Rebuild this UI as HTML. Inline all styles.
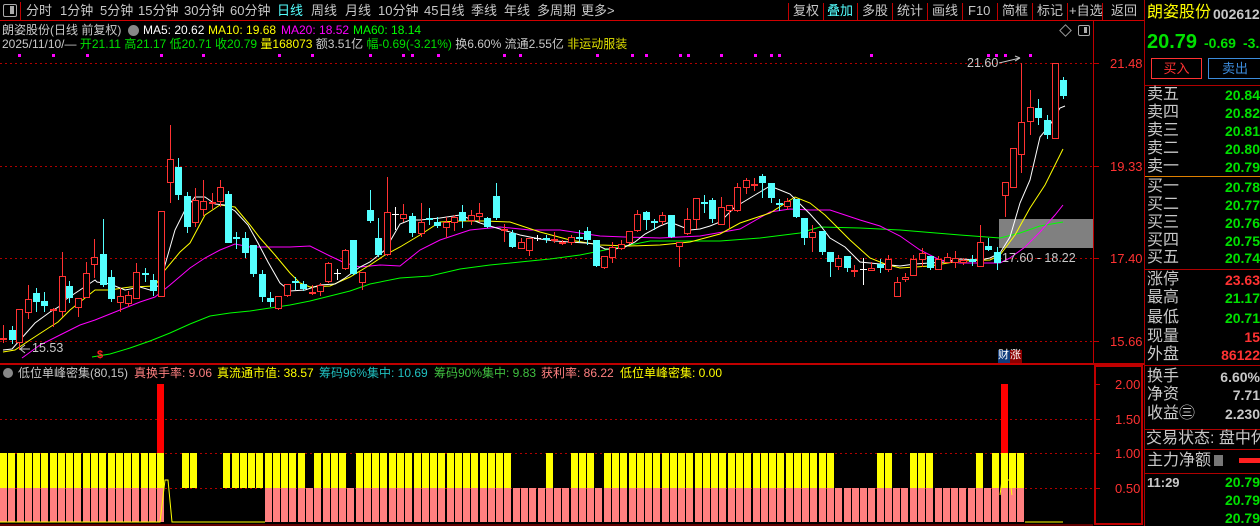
<!DOCTYPE html>
<html><head><meta charset="utf-8">
<style>
html,body{margin:0;padding:0;background:#000;width:1260px;height:526px;overflow:hidden;}
body{position:relative;font-family:"Liberation Sans","Noto Sans CJK SC",sans-serif;color:#c8c8c8;}
.t{position:absolute;white-space:nowrap;line-height:1;}
.tb{font-size:13px;top:4px;color:#c8c8c8;}
.sep{position:absolute;top:3px;width:1px;height:17px;background:#c00000;}
.r1{font-size:12px;top:24px;}
.r2{font-size:12px;top:38px;}
.ih{font-size:12px;top:367px;}
.lab{position:absolute;left:1147px;font-size:16px;color:#c8c8c8;line-height:1;white-space:nowrap;}
.val{position:absolute;right:0;font-size:14px;font-weight:bold;line-height:1;white-space:nowrap;}
.g{color:#00e000}.rd{color:#ff3232}.gy{color:#c8c8c8}
.hl{position:absolute;left:1145px;width:115px;height:1px;background:#b00000;}
</style></head><body>
<div style="position:absolute;left:3px;top:4px;width:12px;height:11px;border:1px solid #aaa;border-radius:2px;"></div>
<div style="position:absolute;left:10px;top:6px;width:4px;height:8px;background:#aaa;"></div>
<div style="position:absolute;left:20px;top:2px;width:1px;height:18px;background:#c00000"></div>
<div class="t tb" style="left:26px">分时</div>
<div class="t tb" style="left:60px">1分钟</div>
<div class="t tb" style="left:100px">5分钟</div>
<div class="t tb" style="left:138px">15分钟</div>
<div class="t tb" style="left:184px">30分钟</div>
<div class="t tb" style="left:230px">60分钟</div>
<div class="t tb" style="left:277px;color:#54ffff">日线</div>
<div class="t tb" style="left:311px">周线</div>
<div class="t tb" style="left:345px">月线</div>
<div class="t tb" style="left:378px">10分钟</div>
<div class="t tb" style="left:424px">45日线</div>
<div class="t tb" style="left:471px">季线</div>
<div class="t tb" style="left:504px">年线</div>
<div class="t tb" style="left:537px">多周期</div>
<div class="t tb" style="left:581px">更多&gt;</div>
<div class="sep" style="left:788px"></div><div class="t tb" style="left:793px">复权</div>
<div class="sep" style="left:823px"></div><div class="t tb" style="left:827px;color:#54ffff">叠加</div>
<div class="sep" style="left:857px"></div><div class="t tb" style="left:862px">多股</div>
<div class="sep" style="left:892px"></div><div class="t tb" style="left:897px">统计</div>
<div class="sep" style="left:927px"></div><div class="t tb" style="left:932px">画线</div>
<div class="sep" style="left:962px"></div><div class="t tb" style="left:968px">F10</div>
<div class="sep" style="left:997px"></div><div class="t tb" style="left:1002px">简框</div>
<div class="sep" style="left:1032px"></div><div class="t tb" style="left:1037px">标记</div>
<div class="sep" style="left:1067px"></div><div class="t tb" style="left:1069px">+自选</div>
<div class="sep" style="left:1102px"></div><div class="t tb" style="left:1111px">返回</div>
<div style="position:absolute;left:0;top:20px;width:1144px;height:1px;background:#d00000"></div>

<div class="t r1" style="left:2px">朗姿股份(日线 前复权)</div>
<div style="position:absolute;left:128px;top:25px;width:11px;height:11px;border-radius:50%;background:#888"></div>
<div class="t r1" style="left:143px;color:#fff">MA5: 20.62</div>
<div class="t r1" style="left:208px;color:#ffff00">MA10: 19.68</div>
<div class="t r1" style="left:281px;color:#ff00ff">MA20: 18.52</div>
<div class="t r1" style="left:353px;color:#00ff00">MA60: 18.14</div>
<div class="t r2" style="left:2px">2025/11/10/— <span class="g">开21.11 高21.17 低20.71 收20.79</span> <span style="color:#ffff00">量168073</span> 额3.51亿 <span class="g">幅-0.69(-3.21%)</span> 换6.60% 流通2.55亿 <span style="color:#e0e000">非运动服装</span></div>

<div style="position:absolute;left:1061px;top:26px;width:7px;height:7px;border:1px solid #999;transform:rotate(45deg)"></div>
<div style="position:absolute;left:1078px;top:25px;width:10px;height:9px;border:1px solid #aaa;border-radius:2px"></div>
<div style="position:absolute;left:1084px;top:27px;width:3px;height:6px;background:#aaa"></div>

<svg id="ch" width="1260" height="526" style="position:absolute;left:0;top:0" xmlns="http://www.w3.org/2000/svg"></svg>

<div class="t" style="left:967px;top:57px;font-size:12.5px;color:#c8c8c8">21.60</div>
<div class="t" style="left:1002px;top:252px;font-size:12.5px;color:#c8c8c8">17.60 - 18.22</div>
<div class="t" style="left:32px;top:342px;font-size:12.5px;color:#c8c8c8">15.53</div>
<div class="t" style="left:97px;top:350px;font-size:11px;color:#ff2020;font-weight:bold">$</div>
<div class="t" style="left:998px;top:350px;font-size:11px;color:#fff;background:#103c7c;width:12px;height:13px">财</div>
<div class="t" style="left:1010px;top:350px;font-size:11px;color:#fff;background:#8c0000;width:12px;height:13px">涨</div>
<div class="t" style="left:1110px;top:57px;font-size:13px;color:#ff3232">21.48</div>
<div class="t" style="left:1110px;top:160px;font-size:13px;color:#ff3232">19.33</div>
<div class="t" style="left:1110px;top:252px;font-size:13px;color:#ff3232">17.40</div>
<div class="t" style="left:1110px;top:335px;font-size:13px;color:#ff3232">15.66</div>

<div style="position:absolute;left:3px;top:368px;width:10px;height:10px;border-radius:50%;background:#888"></div>
<div class="t ih" style="left:18px;color:#c8c8c8">低位单峰密集(80,15)</div>
<div class="t ih" style="left:134px;color:#ff8080">真换手率: 9.06</div>
<div class="t ih" style="left:217px;color:#ffff00">真流通市值: 38.57</div>
<div class="t ih" style="left:319px;color:#20c0c0">筹码96%集中: 10.69</div>
<div class="t ih" style="left:434px;color:#40c040">筹码90%集中: 9.83</div>
<div class="t ih" style="left:541px;color:#ff8080">获利率: 86.22</div>
<div class="t ih" style="left:620px;color:#ffff00">低位单峰密集: 0.00</div>
<div class="t" style="left:1115px;top:378px;font-size:13px;color:#ff3232">2.00</div>
<div class="t" style="left:1115px;top:413px;font-size:13px;color:#ff3232">1.50</div>
<div class="t" style="left:1115px;top:447px;font-size:13px;color:#ff3232">1.00</div>
<div class="t" style="left:1115px;top:482px;font-size:13px;color:#ff3232">0.50</div>

<div style="position:absolute;left:1144px;top:0;width:1px;height:526px;background:#b00000"></div>
<div class="t" style="left:1147px;top:5px;font-size:16px;color:#ffff00">朗姿股份</div>
<div class="t" style="left:1213px;top:7px;font-size:14px;font-weight:bold;color:#c8c8c8">002612</div>
<div class="t" style="left:1147px;top:32px;font-size:20px;font-weight:bold;color:#00e000">20.79</div>
<div class="t" style="left:1204px;top:36px;font-size:14px;font-weight:bold;color:#00e000">-0.69</div>
<div class="t" style="left:1243px;top:36px;font-size:14px;font-weight:bold;color:#00e000">-3.21%</div>
<div class="t" style="left:1151px;top:58px;width:49px;height:19px;border:1px solid #ff3232;color:#ff3232;font-size:13px;text-align:center;line-height:19px">买入</div>
<div class="t" style="left:1208px;top:58px;width:52px;height:19px;border:1px solid #3c8cdc;color:#3c8cdc;font-size:13px;text-align:center;line-height:19px">卖出</div>
<div class="hl" style="top:85px"></div>
<div class="hl" style="top:176px;background:#e08000"></div>
<div class="hl" style="top:269px"></div>
<div class="hl" style="top:365px"></div>
<div class="hl" style="top:429px"></div>
<div class="hl" style="top:449px"></div>
<div class="hl" style="top:473px"></div>
<div id="rp"></div>

<script>
var s='';
function L(x1,y1,x2,y2,c,w,da){s+='<line x1="'+x1+'" y1="'+y1+'" x2="'+x2+'" y2="'+y2+'" stroke="'+c+'" stroke-width="'+(w||1)+'"'+(da?' stroke-dasharray="'+da+'"':'')+'/>';}
function R(x,y,w,h,f,st,sw){s+='<rect x="'+x+'" y="'+y+'" width="'+w+'" height="'+h+'" fill="'+f+'"'+(st?' stroke="'+st+'" stroke-width="'+(sw||1)+'"':'')+'/>';}
[63,166,258,341].forEach(function(y){L(0,y+.5,1093,y+.5,'#b00000',1,'2,3');L(1093,y+.5,1099,y+.5,'#c00000');});
[419,453,488].forEach(function(y){L(0,y+.5,1093,y+.5,'#b00000',1,'2,3');});
L(1093.5,21,1093.5,364,'#c00000');
L(0,364,1144,364,'#c00000',2);
R(1095,366,47,158,'none','#c00000',2);
[384,419,453,488].forEach(function(y){L(1095,y+.5,1100,y+.5,'#c00000');});
L(0,525,1093,525,'#c00000');
[18,52,86,160,202,278,311,369,402,411,437,503,519,596,631,645,679,687,720,754,770,778,870,987,995,1004,1029].forEach(function(x){R(x,54,3,3,'#ff00ff');});
R(999,219,94,29,'#808080');
function P(pts,c){s+='<polyline fill="none" stroke="'+c+'" stroke-width="1" points="'+pts+'"/>';}
P("92,357 110,354 130,348 150,341 170,333 190,324 210,316 230,313 250,311 270,308 290,305 310,301 330,296 350,291 370,284 400,278 430,276 460,269 490,265 520,262 550,259 580,255 620,247 650,241 680,241 720,241 760,238 800,233 820,227 860,228 900,230 960,235 1000,238 1020,233 1040,226 1063,222","#00ff00");
P("22,358 40,345 60,335 80,325 95,320 120,310 140,302 155,297 170,285 190,268 205,258 220,250 235,244 250,247 270,247 290,247 310,246 330,256 345,263 360,267 380,265 400,266 420,250 440,240 470,230 500,227 530,230 560,230 600,236 625,237 660,238 700,236 740,229 770,212 790,209 810,210 830,210 860,220 880,226 900,236 920,250 940,260 960,263 1000,263 1010,258 1025,247 1040,232 1055,215 1063,205","#ff00ff");
P("3,352 15,350 30,340 50,327 58,322 70,310 85,298 95,290 110,290 130,287 155,286 165,270 180,252 190,243 205,215 220,205 235,207 250,225 260,238 275,255 290,273 300,283 310,287 330,286 350,277 370,265 385,255 400,247 420,235 440,222 460,221 485,221 510,222 540,232 570,240 600,245 630,246 660,245 690,242 720,234 740,223 770,213 795,197 810,203 825,215 840,230 850,240 870,258 885,264 900,268 930,266 960,261 990,260 1000,255 1015,235 1030,208 1045,185 1063,149","#ffff00");
P("3,350 12,349 20,340 35,323 50,312 60,306 65,300 80,290 95,280 97,282 110,284 125,290 140,287 150,290 160,285 165,265 175,230 185,210 195,197 205,197 215,204 225,205 235,211 248,225 258,243 268,262 280,283 290,291 305,290 320,285 335,284 345,278 360,267 370,262 385,250 400,224 410,220 420,220 440,218 460,215 480,223 500,229 520,235 540,239 555,241 570,242 585,243 595,244 605,249 615,249 625,247 635,242 645,234 660,226 670,222 680,226 690,230 700,229 710,226 720,222 735,207 750,198 760,192 770,186 780,190 790,194 800,204 810,214 820,225 830,238 845,247 860,262 880,264 900,266 915,264 930,263 945,262 960,259 980,260 990,258 1000,253 1010,237 1020,203 1030,180 1040,137 1050,125 1060,108 1065,106","#ffffff");
var C=[[3.3,'r',338,338,325,343],[11.7,'c',330,340,326,344],[19.3,'r',309,342,309,350],[28.3,'r',299,312,285,319],[36,'c',293,302,288,312],[44.3,'c',301,306,292,312],[53.3,'r',309,309,308,327],[61.7,'r',276,311,252,317],[69.3,'c',286,298,281,303],[78.3,'r',298,307,298,317],[86,'r',273,297,262,297],[94.3,'r',257,264,239,278],[103.3,'c',254,285,219,287],[111,'c',277,299,270,302],[120,'r',296,302,288,312],[128.3,'r',295,303,291,307],[136,'r',272,298,263,299],[145,'c',273,273,268,282],[153.3,'c',280,291,274,296],[161,'r',211,296,211,296],[170,'r',159,182,125,203],[178.3,'c',167,195,158,200],[186.7,'c',196,227,192,233],[195,'r',200,222,188,227],[203.3,'r',201,209,180,216],[211.7,'r',202,202,193,209],[220,'r',187,201,180,207],[228.3,'c',194,243,191,243],[236,'c',237,237,232,249],[245,'c',238,253,232,258],[253.3,'c',245,274,245,277],[261.7,'c',274,297,270,302],[270,'c',298,302,292,307],[278.3,'r',296,308,296,310],[286.7,'r',284,295,284,297],[295,'c',281,281,277,290],[303.3,'c',284,289,281,291],[311.7,'r',292,292,285,295],[320,'r',285,291,283,296],[328.3,'r',263,281,262,283],[336.7,'w',273,273,269,280],[345,'r',250,268,249,270],[353.3,'c',240,274,240,275],[361.7,'r',272,282,272,290],[370,'c',210,221,190,223],[378.3,'c',238,255,218,257],[386.7,'r',212,254,177,256],[395,'w',214,214,207,230],[403.3,'r',214,218,204,222],
[412.3,'c',216,233,213,237],[420.7,'r',222,233,203,237],[429.3,'c',218,218,208,225],[437.3,'c',222,226,217,228],[445.7,'r',222,227,217,238],[454,'r',217,222,215,231],[462.3,'c',212,221,205,228],[470.7,'r',215,220,210,225],[479,'r',213,216,203,222],[487.3,'c',218,227,217,228],[495.7,'c',196,218,183,220],[504,'r',229,229,224,242],[512.3,'c',233,247,230,248],[520.7,'r',242,248,238,248],[529,'r',238,250,238,256],[537.3,'w',238,238,235,241],[545.7,'c',238,238,235,243],[554,'r',239,239,232,243],[562.3,'r',242,242,240,245],[570.7,'r',237,242,235,245],[579,'c',237,237,230,242],[587.3,'c',231,240,227,245],[595.7,'c',240,266,240,267],[604,'r',256,267,256,269],[612.3,'r',247,257,242,263],[620.7,'r',244,248,240,250],[629,'r',231,242,231,244],[637.3,'r',214,230,210,232],[645.7,'c',212,220,211,230],[654,'c',221,221,219,230],[662.3,'r',215,221,212,225],[670.7,'c',215,237,215,238],[679,'r',242,246,242,267],[687.3,'r',219,233,208,235],[695.7,'r',198,219,198,229],[704,'c',202,202,195,213],[712.3,'c',200,219,198,223],[720.7,'r',207,224,197,224],[729,'r',205,210,205,228],[737.3,'r',187,210,183,212],[745.7,'r',180,187,178,194],[754,'r',184,184,178,191],[762.3,'c',176,183,174,198],[770.7,'c',183,198,183,203],[779,'c',203,203,199,211],[787.3,'r',201,206,198,210],[795.7,'c',199,217,199,218],[804,'c',218,238,218,245],[812.3,'r',232,237,225,252],
[821.7,'c',231,252,231,255],[830,'c',252,262,252,277],[838.3,'r',258,266,255,270],[846.7,'c',256,268,256,272],[854.3,'r',270,270,265,277],[862.7,'w',269,269,258,285],[871,'r',268,270,262,270],[880,'c',264,268,259,273],[888.3,'r',259,269,255,272],[896.7,'r',282,296,277,297],[905,'r',277,279,273,282],[913.3,'r',259,275,255,275],[921.7,'r',253,259,248,267],[930,'c',256,268,256,270],[938.3,'r',259,269,256,270],[946.7,'r',257,262,253,262],[955,'r',258,262,251,268],[963.3,'r',260,262,258,265],[971.7,'c',259,262,255,266],[980,'r',242,266,225,266],[988.3,'c',246,250,238,251],[996.7,'c',252,263,247,270],[1005,'r',182,195,182,217],[1013.3,'r',148,187,148,187],[1021,'r',122,154,63,173],[1030,'r',107,121,90,135],[1038.3,'c',108,118,99,125],[1047.3,'c',120,135,115,139],[1055.3,'r',63,138,63,138],[1063.3,'c',80,96,77,99]];
C.forEach(function(k){var x=Math.round(k[0]),t=k[1],o=k[2],c=k[3],h=k[4],l=k[5];
 var col=t=='r'?'#ff3232':(t=='c'?'#54ffff':'#ffffff');
 var xc=x+.5;
 L(xc,h,xc,l,col);
 if(o==c){L(x-3,o+.5,x+4,o+.5,col,1);if(t!='w')L(x-3,o+1.5,x+4,o+1.5,col,1);}
 else if(t=='r'){R(x-3+.5,o+.5,6,c-o,'#000','#ff3232');}
 else{R(x-3,o,7,c-o,col);}
});
L(999,63,1020,58,'#c8c8c8');L(1015,56,1020,58,'#c8c8c8');L(1015,61,1020,58,'#c8c8c8');
L(20,349,30,349,'#c8c8c8');L(20,349,25,345,'#c8c8c8');L(20,349,25,353,'#c8c8c8');
function inr(i,a){return i>=a[0]&&i<=a[1];}
var Y=[[0,19],[22,23],[27,36],[38,41],[43,61],[66,66],[69,71],[73,100],[106,107],[110,112],[118,118],[120,123]];
var Pk=[[0,19],[32,123]];
for(var i=0;i<=123;i++){var x=Math.round(i*8.27);
 if(Pk.some(function(a){return inr(i,a)}))R(x,488,7,34,'#ff8080');
 if(Y.some(function(a){return inr(i,a)}))R(x,453,7,35,'#ffff00');
 if(i==19||i==121)R(x,384,7,69,'#ff0000');
}
P("0,522 160,522 165,480 168,480 172,522 265,522","#ffff00");
P("1000,495 1002,480 1010,480 1012,495","#ffff00");
L(1025,522,1063,522,'#ffff00');
document.getElementById('ch').innerHTML=s;
var rows=[['卖五','20.84',95,'g'],['卖四','20.82',113,'g'],['卖三','20.81',131,'g'],['卖二','20.80',149,'g'],['卖一','20.79',167,'g'],
['买一','20.78',187,'g'],['买二','20.77',205,'g'],['买三','20.76',223,'g'],['买四','20.75',241,'g'],['买五','20.74',258,'g'],
['涨停','23.63',280,'rd'],['最高','21.17',298,'g'],['最低','20.71',318,'g'],['现量','15',337,'rd'],['外盘','86122',355,'rd'],
['换手','6.60%',377,'gy'],['净资','7.71',395,'gy'],['收益㊂','2.230',414,'gy']];
var h='';
rows.forEach(function(r){h+='<div class="lab" style="top:'+(r[2]-8)+'px">'+r[0]+'</div><div class="val '+r[3]+'" style="top:'+(r[2]-7)+'px">'+r[1]+'</div>';});
h+='<div class="lab" style="top:431px;left:1146px">交易状态: 盘中休</div>';
h+='<div class="lab" style="top:453px">主力净额</div><div style="position:absolute;left:1214px;top:455px;width:9px;height:11px;background:#777"></div><div style="position:absolute;left:1239px;top:458px;width:21px;height:5px;background:#ff2020"></div>';
h+='<div class="t" style="left:1147px;top:476px;font-size:13px;font-weight:bold;color:#c8c8c8">11:29</div>';
[482,500,518].forEach(function(y){h+='<div class="val g" style="top:'+(y-7)+'px">20.79</div>';});
document.getElementById('rp').innerHTML=h;
</script>
</body></html>
